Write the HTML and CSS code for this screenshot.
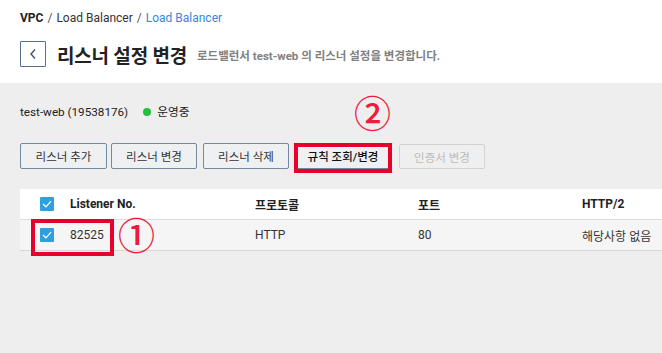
FILE: index.html
```html
<!DOCTYPE html>
<html lang="ko">
<head>
<meta charset="utf-8">
<link rel="stylesheet" href="styles.css">
</head>
<body>
<header class="top">
  <nav class="crumbs"><b>VPC</b><span class="sep">/</span><span>Load Balancer</span><span class="sep">/</span><span class="cur">Load Balancer</span></nav>
  <div class="titlebar">
    <button class="back"><svg width="10" height="12" viewBox="0 0 10 12"><path d="M7 1.5 L3 6 L7 10.5" fill="none" stroke="#3c5470" stroke-width="1.4"/></svg></button>
    <h1>리스너 설정 변경</h1>
    <p class="desc">로드밸런서 test-web 의 리스너 설정을 변경합니다.</p>
  </div>
</header>
<main class="main">
  <div class="info">test-web (19538176)<span class="dot"></span>운영중</div>
  <div class="btns">
    <button class="btn w1">리스너 추가</button>
    <button class="btn w2">리스너 변경</button>
    <button class="btn w3">리스너 삭제</button>
    <span class="hl">
      <button class="btn w4">규칙 조회/변경</button>
      <span class="mark m2">②</span>
    </span>
    <button class="btn w5 dis">인증서 변경</button>
  </div>
  <div class="table">
    <div class="row head">
      <div class="c0"><span class="cb"><svg width="10" height="8" viewBox="0 0 10 8"><path d="M1 4 L4 6.8 L9 1.2" fill="none" stroke="#fff" stroke-width="1.2"/></svg></span></div>
      <div class="c1">Listener No.</div>
      <div class="c2">프로토콜</div>
      <div class="c3">포트</div>
      <div class="c4">HTTP/2</div>
    </div>
    <div class="row body">
      <div class="c0"><span class="cb"><svg width="10" height="8" viewBox="0 0 10 8"><path d="M1 4 L4 6.8 L9 1.2" fill="none" stroke="#fff" stroke-width="1.2"/></svg></span></div>
      <div class="c1">82525</div>
      <div class="c2">HTTP</div>
      <div class="c3">80</div>
      <div class="c4">해당사항 없음</div>
      <span class="box1"></span>
      <span class="mark m1">①</span>
    </div>
  </div>
</main>
</body>
</html>
```
FILE: styles.css
```css
*, *::before, *::after { box-sizing: border-box; }
html, body { margin: 0; padding: 0; }
body {
  width: 662px; height: 353px; overflow: hidden;
  font-family: Roboto, "Noto Sans CJK KR", sans-serif;
  color: #333; background: #eeeeee;
  font-size: 13px;
}
.top { background: #fff; height: 83px; padding: 9px 20px 0; }
.crumbs { height: 18px; line-height: 18px; font-size: 12px; color: #333; }
.crumbs b { font-weight: 700; color: #222; }
.crumbs .sep { margin: 0 4px 0 4px; color: #555; }
.crumbs .cur { color: #3a87d0; }
.titlebar { display: flex; align-items: center; margin-top: 14px; height: 26px; }
.back {
  width: 26px; height: 26px; padding: 0; margin: 0;
  border: 1px solid #56708f; border-radius: 1px; background: #fff;
  display: flex; align-items: center; justify-content: center;
}
h1 { margin: 0 0 0 11px; font-size: 19px; font-weight: 700; color: #222; letter-spacing: -0.2px; }
.desc { margin: 2px 0 0 10px; font-size: 11.5px; font-weight: 700; color: #808080; }
.main { padding: 0 0 0 20px; position: relative; }
.info { height: 18px; line-height: 18px; margin-top: 20px; display: flex; align-items: center; font-size: 11.7px; color: #222; }
.dot { width: 8px; height: 8px; border-radius: 50%; background: #22c03c; margin: 0 6px 0 15px; }
.btns { display: flex; margin-top: 22px; height: 26px; align-items: flex-start; }
.btn {
  flex: none;
  height: 26px; margin: 0; padding: 0;
  border: 1px solid #7488a0; border-radius: 2px;
  background: #eef0f2; color: #333; font-family: inherit; font-size: 11.5px;
  white-space: nowrap;
}
.w1 { width: 87px; }
.w2 { width: 86px; margin-left: 4px; }
.w3 { width: 86px; margin-left: 6px; }
.hl { position: relative; margin-left: 5px; display: block; flex: none; width: 98px; height: 26px; }
.w4 { width: 94px; font-weight: 500; color: #111; margin-left: 2px; }
.hl::after {
  content: ""; position: absolute; left: 0; top: 0; width: 98px; height: 30px;
  border: 4px solid #e8002c;
}
.w5 { width: 86px; margin-left: 7px; margin-top: 1px; height: 25px; }
.dis { border-color: #cfd3d8; color: #bcbcbc; background: #efefef; }
.mark {
  position: absolute; color: #ec1c3a; font-size: 37px; line-height: 37px;
  font-family: "Noto Sans CJK KR", sans-serif; font-weight: 500;
}
.m2 { left: 60px; top: -49px; }
.m1 { left: 98px; top: -4px; }
.table { margin-top: 20px; }
.row { display: flex; align-items: center; height: 31px; position: relative; font-size: 12px; }
.head { background: #fff; font-weight: 700; color: #222; border-bottom: 1px solid #dcdde0; }
.body { background: #f5f5f6; border-bottom: 1px solid #d6d7da; color: #333; }
.c0 { width: 50px; display: flex; justify-content: flex-end; }
.c1 { width: 185px; position: relative; }
.c2 { width: 163px; }
.c3 { width: 164px; }
.c4 { flex: 1; }
.cb {
  width: 14px; height: 14px; background: #2e9fe0; border-radius: 1px;
  display: flex; align-items: center; justify-content: center; margin-right: 16px;
}
.box1 {
  position: absolute; left: 11px; top: -1px; width: 83px; height: 37px;
  border: 4px solid #e8002c;
}
```
